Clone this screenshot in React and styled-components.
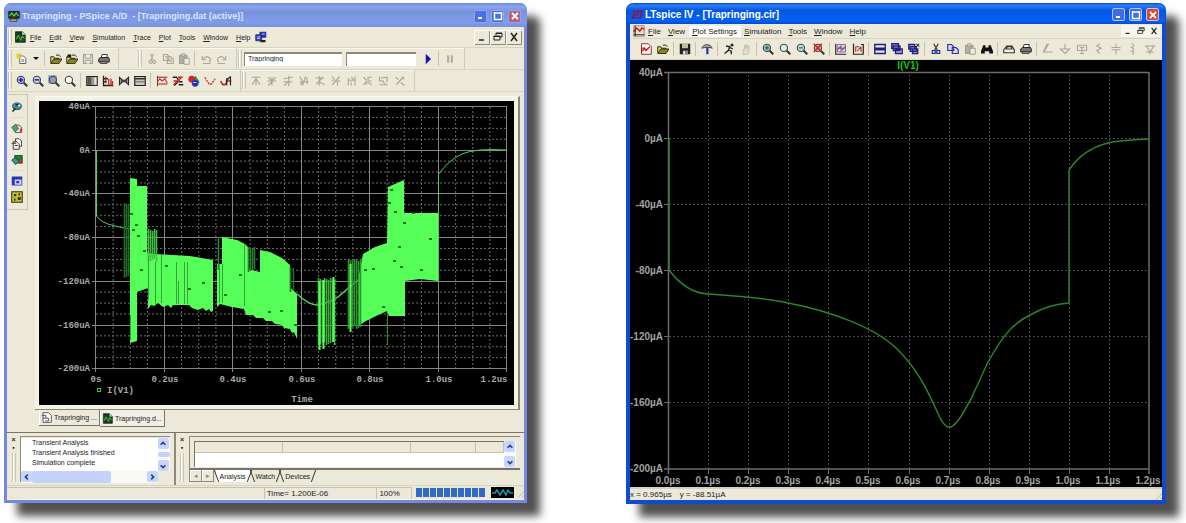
import React from 'react';
import styled, { createGlobalStyle, css } from 'styled-components';

const GlobalStyle = createGlobalStyle`
  * {
    box-sizing: border-box;
  }

  body {
    margin: 0;
    background: #fff;
    color: #222;
    font-family: 'Liberation Sans', Arial, sans-serif;
  }

  button,
  input {
    margin: 0;
    padding: 0;
    border: 0;
    font: inherit;
    color: inherit;
  }
`;

const lens = (tint, mark) => (
  <>
    <path d='M10 10l5 5' stroke='#333' strokeWidth='2.6' />
    <circle cx='6.5' cy='6.5' r='4.8' fill={tint} stroke='#444' strokeWidth='1.5' />
    {mark}
  </>
);

const page = (x, y, fill = '#fff', stroke = '#333') => (
  <path d={`M${x} ${y}h5l3 3v7h-8z`} fill={fill} stroke={stroke} strokeWidth='1.2' />
);

const folder = (
  <>
    <path d='M1 13V5h4l1 2h6v2' fill='#e6dc5a' stroke='#2c2a10' strokeWidth='1.3' />
    <path d='M1 14l4-6h11l-4 6z' fill='#8c8420' stroke='#2c2a10' strokeWidth='1.2' />
    <path d='M8 3q4-2 6 2' stroke='#222' strokeWidth='1.3' fill='none' />
  </>
);

const printer = (
  <>
    <path d='M4 7l1.5-5h7l-1 5' fill='#fff' stroke='#333' strokeWidth='1.3' />
    <path d='M1 8l2-2h11l1 2v4H1z' fill='#777' stroke='#222' strokeWidth='1.3' />
    <path d='M3 12h9v2H3z' fill='#d8d48a' stroke='#222' />
  </>
);

const grey = (d) => (
  <path d={d} stroke='#aaa698' strokeWidth='1.5' fill='none' />
);

const icons = {
  app: (
    <>
      <path d='M1 2h14v9H1z' fill='#173f22' stroke='#111' />
      <path d='M2 8l3-4 3 4 3-4 3 4' stroke='#66e06a' strokeWidth='1.5' fill='none' />
      <path d='M3 12h9v3H3z' fill='#d7c64f' stroke='#222' />
    </>
  ),
  doc: (
    <>
      <path d='M2 1h9l4 4v10H2z' fill='#123c1f' stroke='#0b1f10' />
      <path d='M11 1v4h4' fill='#e6e6e6' />
      <path d='M3 11l3-5 3 6 2-5 3 3' stroke='#25c23a' strokeWidth='1.6' fill='none' />
      <path d='M3 7l4 2 6 4' stroke='#c2412f' fill='none' />
    </>
  ),
  win: (
    <>
      <path d='M6 1h9v8H6z' fill='#2733a8' />
      <path d='M1 5h8v8H1z' fill='#3844c4' stroke='#151b5c' />
      <path d='M3 8h4M3 10h3M9 4h4' stroke='#dfe3ff' strokeWidth='1.2' />
      <path d='M7 12h7v3H7z' fill='#222' />
    </>
  ),
  newFile: (
    <>
      {page(5, 4, '#fff', '#555')}
      <path d='M7 9h4M7 11h4' stroke='#557' />
      <path d='M4 0v8M0 4h8M1 1l6 6M7 1L1 7' stroke='#d8cf2c' strokeWidth='1.5' />
    </>
  ),
  open: folder,
  openDark: (
    <>
      {folder}
      <path d='M2 2h5v4H2z' fill='#111' />
    </>
  ),
  saveOff: (
    <>
      <path d='M2 2h12v12H2z' fill='#dedbca' stroke='#9d9a8b' strokeWidth='1.4' />
      <path d='M5 2v5h6V2M5 14v-4h6v4' stroke='#9d9a8b' strokeWidth='1.2' fill='#f5f3e8' />
    </>
  ),
  save: (
    <>
      <path d='M1 1h14v14H1z' fill='#20241a' />
      <path d='M4 1h8v6H4z' fill='#b9c39b' />
      <path d='M5 10h7v5H5z' fill='#888' />
      <path d='M6 11h2v4H6z' fill='#fff' />
    </>
  ),
  print: printer,
  cutOff: grey('M6 1l4 9M10 1L6 10M6 10a2 2 0 1 0 .1 0M11 10a2 2 0 1 0 .1 0'),
  copyOff: grey('M2 2h5l2 2v6H2zM7 5h5l3 3v6H7zM4 5h3M9 9h4M9 11h4'),
  pasteOff: (
    <>
      <path d='M2 3h10v11H2z' fill='#b3af9f' stroke='#8f8c7d' />
      <path d='M5 1h4v3H5zM8 7h7v8H8z' fill='#eceadc' stroke='#8f8c7d' />
    </>
  ),
  undoOff: grey('M3 4v5h5M4 8q4-5 8-2t0 6M4 14h10'),
  redoOff: grey('M13 4v5H8M12 8q-4-5-8-2t0 6M2 14h10'),
  play: <path d='M5 1l7 7-7 7z' fill='#1414b8' />,
  pauseOff: <path d='M4 3h3v10H4zM9 3h3v10H9z' fill='#b5b2a5' />,
  zoomIn: lens('#b9bff0', <path d='M6.5 3.5v6M3.5 6.5h6' stroke='#1a22b0' strokeWidth='2' />),
  zoomOut: lens('#c9cdf0', <path d='M3.5 6.5h6' stroke='#1a22b0' strokeWidth='2' />),
  zoomArea: (
    <>
      <path d='M1 1h10v10H1z' fill='#a7acd6' stroke='#6a6f9c' strokeDasharray='2 1' />
      {lens('#8f96cc', null)}
    </>
  ),
  zoomFit: lens('#fff', null),
  fade: (
    <>
      <path d='M1 2h14v12H1z' fill='#9a9a94' stroke='#222' strokeWidth='1.4' />
      <path d='M2 3h5v10H2z' fill='#555' />
      <path d='M11 3h3v10h-3z' fill='#e4e2d8' />
    </>
  ),
  fft: (
    <>
      <path d='M2 1v13h13M2 5h6M2 9h4' stroke='#222' strokeWidth='1.7' fill='none' />
      <path d='M5 2v9M9 5v9M12 5v9M14 8v7' stroke='#c22626' strokeWidth='1.7' />
    </>
  ),
  bowtie: (
    <>
      <path d='M2 3l4 4h4l4-4v10l-4-4H6l-4 4z' fill='#999' stroke='#222' strokeWidth='1.4' />
      <path d='M5 5v6M11 5v6' stroke='#222' />
    </>
  ),
  panel: (
    <>
      <path d='M1 2h14v12H1z' fill='#c9c6b6' stroke='#222' strokeWidth='1.6' />
      <path d='M1 4h14v2H1z' fill='#333' />
      <path d='M1 9h14' stroke='#777' strokeWidth='1.6' />
    </>
  ),
  trace: (
    <>
      <path d='M2 1v14M2 3h13M2 12h13' stroke='#8b2020' strokeWidth='1.3' />
      <path d='M2 9l3-4 3 3 4-3 3 6' stroke='#d12b2b' strokeWidth='1.5' fill='none' />
    </>
  ),
  evalX: (
    <>
      <path d='M1 3h5l4 6M9 13h6M9 9h5M8 9l-5 5' stroke='#222' strokeWidth='1.7' fill='none' />
      <path d='M2 13L14 2M8 3h6M2 8h8' stroke='#cf2525' strokeWidth='1.8' />
    </>
  ),
  shapes: (
    <>
      <path d='M10 1l6 9H5z' fill='#1d9c38' />
      <circle cx='5' cy='5.5' r='4.5' fill='#d22525' />
      <circle cx='9.5' cy='11' r='4.5' fill='#2432c4' />
      <path d='M7 10h4' stroke='#fff' />
    </>
  ),
  dots: (
    <path d='M1 3l3 5 3 4h3l3-4 2-3' stroke='#d23131' strokeWidth='1.7' strokeDasharray='3 1' fill='none' />
  ),
  cursorTrace: (
    <>
      <path d='M1 8q2 6 5 5t3-5h6' stroke='#c32020' strokeWidth='2' fill='none' />
      <path d='M14 2L8 8M9 4v10M14 2v12' stroke='#222' strokeWidth='1.5' />
    </>
  ),
  c1: grey('M8 2v12M2 3h12M8 5L3 13M8 5l5 8'),
  c2: grey('M8 2v12M2 8h12M3 3l5 5 5-5M3 14l5-5'),
  c3: grey('M9 1v14M2 5l12-2M2 9h12M8 9l-5 5'),
  c4: grey('M2 2l4 6M10 2L6 14M2 9h12M12 3v9M3 13l4-4'),
  c5: grey('M2 4h11M7 1v13M7 9l7 4M12 3L3 12'),
  c6: grey('M3 2l3 4M13 2L3 13M8 8h6M10 8v6M2 7h4'),
  c7: grey('M3 4v10M3 7h10M12 2v12M7 3l3 3M7 9v5'),
  c8: grey('M2 3l4 4M13 3H8v5h5M2 13q4-6 11 0M5 8v5'),
  c9: grey('M2 2v6h6M4 4l8-1v7M2 13h11M6 8l4 5'),
  c10: grey('M2 3l4 3M13 2L3 13M9 5l5 0M9 10l5 4'),
  probe: (
    <>
      <ellipse cx='8' cy='7' rx='6' ry='4.500' fill='#3b8fa0' stroke='#28404a' />
      <path d='M2 14l4-4M6 5h4' stroke='#222' strokeWidth='2' />
      <circle cx='11' cy='6' r='1.5' fill='#fff' />
    </>
  ),
  sheetGreen: (
    <>
      {page(6, 4, '#ddd', '#555')}
      <path d='M1 7l5-4 4 6-5 4z' fill='#57a462' stroke='#355' />
      <path d='M12 9h3v4h-3z' fill='#c23a3a' />
    </>
  ),
  sheets: (
    <>
      {page(6, 1)}
      {page(3, 5, '#eee')}
      <path d='M1 7h6M5 10h4' stroke='#333' strokeWidth='1.4' />
    </>
  ),
  chip: (
    <>
      <path d='M5 2h10v10H5z' fill='#1f7a38' stroke='#16301d' />
      <path d='M1 8l5-3 5 5-5 4z' fill='#3a9b8e' stroke='#123' />
      <path d='M11 8h4v5h-4z' fill='#b03c2c' />
    </>
  ),
  windowBlue: (
    <>
      <path d='M1 2h14v12H1z' fill='#2b35bb' />
      <path d='M5 6h9v7H5z' fill='#cfd3f5' />
      <path d='M7 8h4v3H7z' fill='#2b35bb' />
    </>
  ),
  board: (
    <>
      <path d='M1 1h14v14H1z' fill='#c8bf3b' stroke='#33300f' strokeWidth='1.4' />
      <path d='M4 4h3v3H4zM9 8h4v4H9zM4 10h2v3H4zM10 3h2v3h-2z' fill='#2e3b14' />
    </>
  ),
  sheetTab: (
    <>
      <path d='M3 1h8l4 4v10H3z' fill='#fff' stroke='#555' strokeWidth='1.4' />
      <path d='M1 5h6v4H3M7 9h4v4H6' stroke='#555' strokeWidth='1.4' fill='none' />
    </>
  ),
  logo: (
    <path d='M5 3h10l-3 9H2zM5 9l6-4' stroke='#8b1a3a' strokeWidth='2.2' fill='none' />
  ),
  plotDoc: (
    <>
      <path d='M1 1h14v14H1z' fill='#f2d9d4' stroke='#777' />
      <path d='M1 9l4-5 4 4 3-4 3 2' stroke='#d01c1c' strokeWidth='2' fill='none' />
      <path d='M1 13h14M3 1v14' stroke='#333' strokeWidth='1.4' />
    </>
  ),
  newPlot: (
    <>
      <path d='M2 1h9l4 4v10H2z' fill='#fff' stroke='#8c2a2a' strokeWidth='1.3' />
      <path d='M3 11l3-4 2 3 5-5M3 7h3' stroke='#d81f1f' strokeWidth='2' fill='none' />
    </>
  ),
  hammer: (
    <>
      <path d='M1 7q2-5 7-5t7 5l-3-1H5z' fill='#9da1a8' stroke='#333' />
      <path d='M7 6h3v9H7z' fill='#2430c8' />
    </>
  ),
  run: (
    <>
      <circle cx='12' cy='2.5' r='2' fill='#222' />
      <path d='M4 4l5 1-2 5-5 4M7 9l4 2v4M9 6l4 2' stroke='#222' strokeWidth='1.8' fill='none' />
    </>
  ),
  handOff: (
    <path d='M4 15V8l2 1V3h1v4l1-5h1v5l2-4v5l1-3v7l-2 4z' fill='#e0ddcf' stroke='#c0bdae' />
  ),
  lensIn: lens('#8fc4bc', <path d='M6.5 4v5M4 6.5h5' stroke='#2b5c55' strokeWidth='1.5' />),
  lensPan: lens('#d8f2ee', null),
  lensOut: lens('#b5e2dc', <path d='M4 6.5h5' stroke='#2b5c55' strokeWidth='1.5' />),
  lensFit: (
    <>
      {lens('#e9a9a9', null)}
      <path d='M1 1l11 11M12 1L1 12' stroke='#cc1e1e' strokeWidth='2' />
    </>
  ),
  grid: (
    <>
      <path d='M1 1v14h14' stroke='#222' strokeWidth='1.5' fill='none' />
      <path d='M3 2h11v10H3zM3 7h11M8 2v10' fill='#d5d3e8' stroke='#555a9c' />
      <path d='M3 9l4-4 3 4 4-5' stroke='#c53030' strokeWidth='1.4' fill='none' />
    </>
  ),
  axes: (
    <>
      <path d='M2 1v14h13V2h-3' stroke='#222' strokeWidth='1.6' fill='none' />
      <path d='M5 12V5h5M12 5l-5 6M12 5v7' stroke='#b02a2a' strokeWidth='1.4' fill='none' />
    </>
  ),
  tile: (
    <path d='M1 2h14v5H1zM1 9h14v5H1z' fill='#e6e8fa' stroke='#20207a' strokeWidth='1.8' />
  ),
  cascade: (
    <path d='M1 1h9v6H1zM3 4h9v6H3zM6 8h9v6H6z' fill='#b6bbf0' stroke='#20207a' strokeWidth='1.7' />
  ),
  closeAll: (
    <>
      <path d='M1 2h8v6H1zM3 5h8v6H3zM6 8h7v6H6z' fill='#b6bbf0' stroke='#20207a' strokeWidth='1.7' />
      <path d='M11 1l4 4M15 1l-4 4' stroke='#222' strokeWidth='1.4' />
    </>
  ),
  cut: (
    <>
      <path d='M5 1l5 9M11 1L6 10' stroke='#333' strokeWidth='1.6' />
      <path d='M3 10h4v4H3zM9 10h4v4H9z' fill='#c9ccf5' stroke='#252a90' strokeWidth='1.5' />
    </>
  ),
  copy: (
    <path d='M1 2h5l3 3v5H1zM7 6h5l3 3v5H7z' fill='#d5d8f5' stroke='#2c3290' strokeWidth='1.5' />
  ),
  find: (
    <path d='M3 3h3v3h4V3h3l3 8v3h-5v-3H5v3H0v-3z' fill='#111' />
  ),
  setup: (
    <path d='M1 9l4-5h7l3 5v4H1zM4 8l2-3h5l1 3z' fill='#f4f2e8' stroke='#333' strokeWidth='1.5' />
  ),
  wireOff: grey('M9 1L3 11M7 1L2 12h12'),
  gndOff: grey('M8 1v7M2 8h12l-6 6z'),
  labelOff: grey('M2 3h12v7H2zM8 5v9M5 14h6M5 6h6'),
  resOff: grey('M9 1l-4 3 6 3-6 3 4 4'),
  capOff: grey('M8 1v5M2 6h12M2 9h12M8 9v6'),
  indOff: grey('M6 1q6 2 0 5 6 2 0 5 5 1 1 4'),
  diodeOff: grey('M1 4h14M3 4l5 8 5-8M3 12h10M8 12v3'),
  partOff: grey('M4 2h10v11H4zM1 7h3'),
};

const Icon = ({ name, size = 12 }) => (
  <svg width={size} height={size} viewBox='0 0 16 16' fill='none' aria-hidden='true'>
    {icons[name]}
  </svg>
);

const Tools = ({ names }) =>
  names.map((name, i) =>
    name === '|' ? (
      <Separator key={i} />
    ) : (
      <ToolButton key={i} type='button' aria-label={name}>
        <Icon name={name} />
      </ToolButton>
    )
  );

const Menu = ({ items, active, slim }) =>
  items.map((item) => (
    <MenuButton key={item} type='button' $active={item === active} $slim={slim}>
      <u>{item[0]}</u>
      {item.slice(1)}
    </MenuButton>
  ));

const WindowControls = () => (
  <Controls>
    <ControlButton type='button' aria-label='Minimize'>
      <svg width='10' height='10' viewBox='0 0 10 10'>
        <path d='M2 7h4' stroke='#fff' strokeWidth='2' />
      </svg>
    </ControlButton>
    <ControlButton type='button' aria-label='Maximize'>
      <svg width='10' height='10' viewBox='0 0 10 10'>
        <path d='M1 2h8M1.5 1v7.5h7V1' stroke='#fff' strokeWidth='1.5' fill='none' />
      </svg>
    </ControlButton>
    <ControlButton type='button' aria-label='Close' $close>
      <svg width='10' height='10' viewBox='0 0 10 10'>
        <path d='M2 2l6 6M8 2L2 8' stroke='#fff' strokeWidth='1.8' />
      </svg>
    </ControlButton>
  </Controls>
);

const ChildControls = ({ flat }) => (
  <ChildGroup>
    <ChildButton type='button' aria-label='Minimize document' $flat={flat}>
      <svg width='10' height='10' viewBox='0 0 10 10'>
        <path d='M2 8h5' stroke='#222' strokeWidth='1.5' />
      </svg>
    </ChildButton>
    <ChildButton type='button' aria-label='Restore document' $flat={flat}>
      <svg width='10' height='10' viewBox='0 0 10 10'>
        <path d='M3 3V1h6v4H7M1 4h6v4H1zM1 4.5h6M3 1.5h6' stroke='#222' fill='none' />
      </svg>
    </ChildButton>
    <ChildButton type='button' aria-label='Close document' $flat={flat}>
      <svg width='10' height='10' viewBox='0 0 10 10'>
        <path d='M2 1l6 8M8 1L2 9' stroke='#222' strokeWidth='1.5' />
      </svg>
    </ChildButton>
  </ChildGroup>
);

const arrows = {
  up: 'M2 6l3-3 3 3',
  down: 'M2 4l3 3 3-3',
  left: 'M6 2L3 5l3 3',
  right: 'M4 2l3 3-3 3',
};

const Arrow = ({ dir }) => (
  <ArrowButton type='button' aria-label={`Scroll ${dir}`}>
    <svg width='8' height='8' viewBox='0 0 10 10'>
      <path d={arrows[dir]} stroke='#27407c' strokeWidth='2' fill='none' />
    </svg>
  </ArrowButton>
);

const range = (n) => Array.from({ length: n }, (_, i) => i);

// oscillating current, dense blocks between 0.1us and 1.0us
const bursts = [
  'M130 178L137 179V186H147V253L155 254L190 256L213 260V311L211 312L209 309L206 311L203 308L198 310L192 308L189 305H173L171 308L168 305L163 307L158 303L154 306L151 305L148 309V288L137 292V341L130 343Z',
  'M217 264H222V237L237 240L245 244L248 247V269L260 272V250L270 252L282 258L290 265V287L297 294V339L294 332L292 333L290 329L284 328L282 325L275 324L272 321L266 321L263 318L256 318L253 315L246 315L244 309L232 307L220 304L217 307Z',
  'M358 280L363 254L375 247L387 243L388 187L404 180V213L438 213V281L420 279L405 281V316H389L387 311L376 316L366 321L358 326Z',
];

const stripes = [
  { from: 124, to: 130, top: 203, bottom: 278, color: '#246b28', step: 2 },
  { from: 148, to: 158, top: 229, bottom: 262, color: '#44c046', step: 2 },
  { from: 218, to: 221, top: 237, bottom: 270, color: '#2a852c', step: 2 },
  { from: 248, to: 257, top: 247, bottom: 272, color: '#2b7d2e', step: 2 },
  { from: 290, to: 298, top: 267, bottom: 292, color: '#24682a', step: 3 },
  { from: 318, to: 336, top: 278, bottom: 345, color: '#3cae3e', step: 2 },
  { from: 348, to: 363, top: 259, bottom: 329, color: '#2f9432', step: 2 },
];

const cuts = [
  [148, 256, 300], [155, 262, 304], [161, 254, 303], [176, 262, 304], [178, 281, 304],
  [184, 262, 304], [187, 262, 304], [219, 264, 303], [222, 264, 303], [244, 244, 306],
  [130, 315, 340],
];

const specks = [
  [131, 214], [136, 225], [133, 230], [138, 236], [144, 251], [141, 270], [166, 266],
  [203, 283], [189, 289], [225, 295], [240, 275], [269, 312], [281, 311], [295, 325],
  [391, 190], [389, 203], [395, 212], [404, 223], [413, 213], [430, 239], [399, 247],
  [394, 261], [401, 267], [421, 270], [365, 270], [373, 269], [383, 307],
];

const TrapringChart = () => (
  <Chart viewBox='39 101 475 304' role='img' aria-label='I(V1) against time'>
    <rect x='39' y='101' width='475' height='304' fill='#000' />
    <g stroke='#6c6c6c' strokeDasharray='2 2'>
      {range(25).map((i) => i % 4 !== 0 && (
        <path key={i} d={`M${96 + i * 17.125} 107V368`} />
      ))}
      {range(25).map((i) => i % 4 !== 0 && (
        <path key={i} d={`M96 ${106.5 + i * 10.92}H507`} />
      ))}
    </g>
    <g stroke='#858585'>
      {range(7).map((i) => (
        <path key={i} d={`M${Math.round(96 + i * 68.5) - 0.5} 106V372`} />
      ))}
      {range(7).map((i) => (
        <path key={i} d={`M92 ${Math.round(106 + i * 43.7) + 0.5}H507`} />
      ))}
    </g>
    <g stroke='#55cf58' fill='none'>
      <path d='M96.500 150V216Q101 223 115 226T131 229' />
      <path d='M297 294Q309 305 317 305 333 303 345 291L358 280' strokeWidth='1.5' />
      <path d='M438.500 281V174Q449 160 462 154T507 150' />
      <path d='M387.500 311V345' stroke='#2b8a2e' />
    </g>
    {bursts.map((d) => (
      <path key={d} d={d} fill='#55ff57' />
    ))}
    {stripes.map(({ from, to, top, bottom, color, step }) =>
      range(Math.floor((to - from) / step)).map((i) => (
        <path
          key={`${from}-${i}`}
          d={`M${from + i * step + 0.5} ${top + (i % 3)}V${bottom - (i % 4)}`}
          stroke={color}
          strokeWidth='1.6'
        />
      ))
    )}
    <path d='M319.500 281V350M323.500 280V349M333.500 277V342M350.500 264V332' stroke='#55ff57' strokeWidth='2' />
    {cuts.map(([x, top, bottom]) => (
      <path key={x} d={`M${x + 0.5} ${top}V${bottom}`} stroke='#35a338' />
    ))}
    {specks.map(([x, y]) => (
      <path key={`${x}-${y}`} d={`M${x - 1} ${y}h3`} stroke='#0c4a10' strokeWidth='1.5' />
    ))}
    <MonoLabels textAnchor='end'>
      {['40uA', '0A', '-40uA', '-80uA', '-120uA', '-160uA', '-200uA'].map((label, i) => (
        <text key={label} x='90' y={Math.round(109 + i * 43.7)}>{label}</text>
      ))}
    </MonoLabels>
    <MonoLabels textAnchor='middle'>
      {['0s', '0.2us', '0.4us', '0.6us', '0.8us', '1.0us'].map((label, i) => (
        <text key={label} x={Math.round(96 + i * 68.5)} y='382'>{label}</text>
      ))}
      <text x='494' y='382'>1.2us</text>
      <text x='302' y='402'>Time</text>
    </MonoLabels>
    <rect x='97.500' y='388.500' width='3' height='3' fill='none' stroke='#3fbf42' />
    <MonoLabels>
      <text x='107' y='393'>I(V1)</text>
    </MonoLabels>
  </Chart>
);

const SmoothChart = () => (
  <Chart viewBox='630 60 532 427' role='img' aria-label='I(V1) against time'>
    <rect x='630' y='60' width='532' height='427' fill='#000' />
    <g stroke='#4a4a4a' strokeDasharray='2 2'>
      {range(11).map((i) => (
        <path key={i} d={`M${Math.round(708 + i * 40.1) + 0.5} 75V469`} />
      ))}
      {range(5).map((i) => (
        <path key={i} d={`M669 ${138.5 + i * 66}H1149`} />
      ))}
    </g>
    <g stroke='#6c6c6c'>
      <path d='M668.500 72V474M1149 72V474M664 72.500H1149M664 469H1149' strokeWidth='1.5' />
      {range(5).map((i) => (
        <path key={i} d={`M664 ${138.5 + i * 66}h5`} />
      ))}
      {range(11).map((i) => (
        <path key={i} d={`M${Math.round(708 + i * 40.1) + 0.5} 469v5`} />
      ))}
    </g>
    <path
      d='M669 139V270C678 282 690 293 708 294C736 296 760 297 788 303C830 311 874 327 896 348C918 369 928 392 936 409C940 419 944 427 949 427C957 427 965 409 971 399L988 362C1000 341 1010 324 1032 314C1044 307 1056 304 1069 303V170C1079 155 1092 147 1108 143C1121 140 1135 140 1149 139'
      fill='none'
      stroke='#2b832d'
      strokeWidth='1.5'
    />
    <AxisLabels textAnchor='end'>
      {['40µA', '0µA', '-40µA', '-80µA', '-120µA', '-160µA', '-200µA'].map((label, i) => (
        <text key={label} x='663' y={76 + i * 66}>{label}</text>
      ))}
    </AxisLabels>
    <AxisLabels textAnchor='middle'>
      {range(13).map((i) => (
        <text key={i} x={Math.round(668 + i * 40)} y='484'>{(i / 10).toFixed(1)}µs</text>
      ))}
      <text x='908' y='69' fill='#12c412'>I(V1)</text>
    </AxisLabels>
  </Chart>
);

const App = () => (
  <>
    <GlobalStyle />
    <Desktop>
      <Window $inactive>
        <TitleBar $inactive>
          <Icon name='app' />
          <h1>Trapringing - PSpice A/D &nbsp;- [Trapringing.dat (active)]</h1>
          <WindowControls />
        </TitleBar>

        <MenuBar>
          <Grip />
          <Icon name='doc' />
          <Menu items={['File', 'Edit', 'View', 'Simulation', 'Trace', 'Plot', 'Tools', 'Window', 'Help']} />
          <Icon name='win' />
          <ChildControls />
        </MenuBar>

        <ToolRow>
          <ToolGroup>
            <Grip />
            <Tools names={['newFile']} />
            <DropButton type='button' aria-label='New file options' />
            <Tools names={['|', 'open', 'openDark', 'saveOff', 'print']} />
          </ToolGroup>
          <Spacer />
          <ToolGroup>
            <Grip />
            <Tools names={['cutOff', 'copyOff', 'pasteOff', '|', 'undoOff', 'redoOff']} />
          </ToolGroup>
          <ToolGroup>
            <Grip />
            <Field aria-label='Profile' defaultValue='Trapringing' $width={98} />
            <Field aria-label='Run to' $width={70} />
            <Tools names={['play', '|', 'pauseOff']} />
          </ToolGroup>
        </ToolRow>

        <ToolRow>
          <ToolGroup>
            <Grip />
            <Tools
              names={[
                'zoomIn', 'zoomOut', 'zoomArea', 'zoomFit', '|',
                'fade', 'fft', 'bowtie', 'panel', '|',
                'trace', 'evalX', 'shapes', 'dots', 'cursorTrace',
              ]}
            />
          </ToolGroup>
          <ToolGroup>
            <Grip />
            <Tools names={['c1', 'c2', 'c3', 'c4', 'c5', 'c6', 'c7', 'c8', 'c9', 'c10']} />
          </ToolGroup>
        </ToolRow>

        <Workspace>
          <SideBar>
            <Tools names={['probe', '|', 'sheetGreen', 'sheets', 'chip', '|', 'windowBlue', 'board']} />
          </SideBar>
          <Documents>
            <ChartFrame>
              <TrapringChart />
            </ChartFrame>
            <DocTabs>
              <DocTab type='button'>
                <Icon name='sheetTab' size={11} />
                Trapringing ...
              </DocTab>
              <DocTab type='button' $active>
                <Icon name='doc' size={11} />
                Trapringing.d...
              </DocTab>
            </DocTabs>
          </Documents>
        </Workspace>

        <Panels>
          <Panel $narrow>
            <PanelHandle>
              <button type='button' aria-label='Close output'>×</button>
              <button type='button' aria-label='Pin output'>▪</button>
              <Grip />
            </PanelHandle>
            <Output>
              <OutputLines>
                <p>Transient Analysis</p>
                <p>Transient Analysis finished</p>
                <p>Simulation complete</p>
              </OutputLines>
              <ScrollColumn>
                <Arrow dir='up' />
                <Thumb />
                <Arrow dir='down' />
              </ScrollColumn>
              <ScrollRow>
                <Arrow dir='left' />
                <Thumb />
                <Gutter />
                <Arrow dir='right' />
              </ScrollRow>
            </Output>
          </Panel>

          <Panel>
            <PanelHandle>
              <button type='button' aria-label='Close watch'>×</button>
              <button type='button' aria-label='Pin watch'>▪</button>
              <Grip />
            </PanelHandle>
            <WatchArea>
              <WatchBox>
                <WatchTable>
                  <span />
                  <span />
                  <span />
                  <span />
                </WatchTable>
                <ScrollColumn>
                  <Arrow dir='up' />
                  <Arrow dir='down' />
                </ScrollColumn>
              </WatchBox>
              <SheetTabs>
                <StepButton type='button' aria-label='Previous sheet'>◂</StepButton>
                <StepButton type='button' aria-label='Next sheet'>▸</StepButton>
                <SheetTab type='button' $active>Analysis</SheetTab>
                <SheetTab type='button'>Watch</SheetTab>
                <SheetTab type='button'>Devices</SheetTab>
              </SheetTabs>
            </WatchArea>
          </Panel>
        </Panels>

        <StatusBar>
          <StatusCell $grow={258} />
          <StatusCell $grow={111}>Time= 1.200E-06</StatusCell>
          <StatusCell $grow={32}>100%</StatusCell>
          <Progress>
            {range(10).map((i) => (
              <i key={i} />
            ))}
          </Progress>
          <svg width='23' height='11' viewBox='0 0 23 11' aria-hidden='true'>
            <rect width='23' height='11' fill='#000' />
            <path d='M1 6h3l2-3 3 5 3-5 3 5 2-5 2 3h3' stroke='#1d93a8' strokeWidth='1.5' fill='none' />
          </svg>
          <SizeGrip />
        </StatusBar>
      </Window>

      <Window>
        <TitleBar>
          <Icon name='logo' />
          <h1>LTspice IV - [Trapringing.cir]</h1>
          <WindowControls />
        </TitleBar>

        <MenuBar $slim>
          <Icon name='plotDoc' />
          <Menu
            slim
            items={['File', 'View', 'Plot Settings', 'Simulation', 'Tools', 'Window', 'Help']}
            active='Plot Settings'
          />
          <ChildControls flat />
        </MenuBar>

        <ToolRow $wide>
          <Tools
            names={[
              'newPlot', 'open', '|', 'save', '|', 'hammer', '|', 'run', 'handOff', '|',
              'lensIn', 'lensPan', 'lensOut', 'lensFit', '|', 'grid', 'axes', '|',
              'tile', 'cascade', 'closeAll', '|', 'cut', 'copy', 'pasteOff', 'find', '|',
              'setup', 'print', '|', 'wireOff', 'gndOff', 'labelOff', 'resOff', 'capOff',
              'indOff', 'diodeOff', 'partOff',
            ]}
          />
        </ToolRow>

        <SmoothChart />

        <Readout>
          <span>x = 0.965µs</span>
          <span>y = -88.51µA</span>
          <SizeGrip />
        </Readout>
      </Window>
    </Desktop>
  </>
);

export default App;

const Desktop = styled.main`
  display: grid;
  grid-template-columns: 523fr 540fr;
  column-gap: 99px;
  align-items: start;
  min-height: 100vh;
  padding: 3px 20px 0 4px;
  overflow: hidden;
`;

const Window = styled.section`
  min-width: 0;
  border: ${({ $inactive }) => ($inactive ? '3px solid #7687df' : '4px solid #1149cf')};
  border-top: 0;
  border-radius: 7px 7px 0 0;
  background: #ece9d8;
  box-shadow: 13px 13px 8px rgba(44, 40, 40, 0.82);
  font-size: ${({ $inactive }) => ($inactive ? '7px' : '8px')};

  h1 {
    flex: 1;
    margin: 0;
    color: #fff;
    font-size: ${({ $inactive }) => ($inactive ? '9px' : '10px')};
    white-space: nowrap;
  }
`;

const TitleBar = styled.header`
  display: flex;
  align-items: center;
  column-gap: 2px;
  height: ${({ $inactive }) => ($inactive ? '24px' : '21px')};
  margin: 0 -3px;
  padding: 2px 6px 0 4px;
  border-radius: 7px 7px 0 0;
  background: ${({ $inactive }) =>
    $inactive
      ? 'linear-gradient(#7089d8, #88a4ee 15%, #7893dc 35%, #7e9ce8 80%, #7890dc)'
      : 'linear-gradient(#0a4ac8, #2b7cf4 12%, #0557e2 35%, #0461f4 85%, #0a48cc)'};

  h1 {
    color: ${({ $inactive }) => ($inactive ? '#dbe3fb' : '#fff')};
  }
`;

const Controls = styled.div`
  display: flex;
  column-gap: 4px;
`;

const ControlButton = styled.button`
  display: grid;
  place-items: center;
  width: 13px;
  height: 13px;
  border: 1px solid #b4c5f7;
  border-radius: 2px;
  background: #3f6be4;

  ${Window}:first-child & {
    border-color: #8fa6ee;
    background: #4b70e2;
  }

  ${({ $close }) =>
    $close &&
    css`
      && {
        background: #dc4a28;
      }

      ${Window}:first-child && {
        background: #b5637c;
      }
    `}
`;

const MenuBar = styled.nav`
  display: flex;
  align-items: center;
  height: ${({ $slim }) => ($slim ? '15px' : '21px')};
  padding-left: ${({ $slim }) => ($slim ? '3px' : '0')};
  border-bottom: 1px solid #d8d4c2;
`;

const MenuButton = styled.button`
  padding: ${({ $slim }) => ($slim ? '1px 4px 1px 3px' : '1px 4px')};
  background: ${({ $active }) => ($active ? '#fff' : 'none')};
  white-space: nowrap;
`;

const ChildGroup = styled.div`
  display: flex;
  margin-left: auto;
  padding-right: 2px;
`;

const ChildButton = styled.button`
  display: grid;
  place-items: center;
  width: ${({ $flat }) => ($flat ? '13px' : '16px')};
  height: ${({ $flat }) => ($flat ? '12px' : '15px')};
  background: ${({ $flat }) => ($flat ? '#f6f5ee' : '#ece9d8')};
  box-shadow: ${({ $flat }) =>
    $flat ? 'none' : 'inset 1px 1px #fff, inset -1px -1px #8d8a7b'};

  svg {
    width: ${({ $flat }) => ($flat ? '8px' : '10px')};
  }
`;

const Grip = styled.span`
  flex: none;
  align-self: stretch;
  width: 4px;
  margin: 2px 2px 2px 1px;
  border: solid #c9c5b4;
  border-width: 0 1px;
  box-shadow: inset 1px 0 #fff;
`;

const Separator = styled.span`
  flex: none;
  align-self: stretch;
  width: 1px;
  margin: 3px 3px 3px 2px;
  background: #c5c1b0;
`;

const ToolButton = styled.button`
  flex: none;
  display: grid;
  place-items: center;
  width: 16px;
  height: 16px;
  background: none;
`;

const ToolRow = styled.div`
  display: flex;
  align-items: center;
  height: ${({ $wide }) => ($wide ? '21px' : '22px')};
  padding-left: ${({ $wide }) => ($wide ? '7px' : '0')};
  border-bottom: 1px solid #d8d4c2;
  overflow: hidden;

  ${({ $wide }) =>
    $wide &&
    css`
      ${ToolButton} {
        width: 17px;
      }

      ${Separator} {
        margin: 3px 2px;
      }
    `}
`;

const ToolGroup = styled.div`
  display: flex;
  align-items: center;
  align-self: stretch;
  padding-right: 6px;
  border-right: 1px solid #cfcbba;
  box-shadow: inset 0 1px #f8f7ef;
`;

const Spacer = styled.span`
  width: 18px;
`;

const DropButton = styled.button`
  display: grid;
  place-items: center;
  width: 12px;
  height: 16px;
  background: none;

  &::before {
    content: '';
    border: solid transparent;
    border-width: 3px 3px 0;
    border-top-color: #111;
  }
`;

const Field = styled.input`
  width: ${({ $width }) => $width}px;
  height: 14px;
  margin-right: 4px;
  padding: 0 3px 2px;
  border: solid #8d8a7b;
  border-width: 2px 0 0 1px;
  background: #fff;
`;

const Workspace = styled.div`
  display: flex;
  align-items: flex-start;
`;

const SideBar = styled.div`
  display: flex;
  flex-direction: column;
  align-items: center;
  width: 21px;
  margin-top: 2px;
  padding: 4px 0;
  border: solid #cbc7b6;
  border-width: 1px 1px 1px 0;

  ${Separator} {
    width: 14px;
    height: 1px;
    margin: 2px auto;
    background: #dedbcb;
  }
`;

const Documents = styled.div`
  flex: 1;
  min-width: 0;
  margin: 4px 4px 5px 7px;
`;

const ChartFrame = styled.div`
  padding: 4px;
  border: solid #8a8674;
  border-width: 1px 2px 1px 0;
  border-top-color: #f9f8f1;
  background: #f4f2e6;
`;

const Chart = styled.svg`
  display: block;
  width: 100%;
  height: auto;
`;

const MonoLabels = styled.g`
  fill: #a8a8a8;
  font-family: 'Liberation Mono', monospace;
  font-size: 9px;
  font-weight: bold;
`;

const AxisLabels = styled.g`
  fill: #a0a0a0;
  font-size: 10px;
  font-weight: bold;
`;

const DocTabs = styled.div`
  display: flex;
  align-items: flex-start;
  padding-left: 4px;
`;

const DocTab = styled.button`
  display: flex;
  align-items: center;
  column-gap: 2px;
  height: ${({ $active }) => ($active ? '17px' : '16px')};
  padding: 0 2px;
  border: solid #77746a;
  border-width: 0 1px 1px 0;
  background: ${({ $active }) => ($active ? '#f1efe3' : '#ece9d8')};
  box-shadow: inset 1px 0 #fff;
`;

const Panels = styled.div`
  display: flex;
  height: 53px;
  border-top: 1px solid #77746a;
`;

const Panel = styled.div`
  display: flex;
  flex: ${({ $narrow }) => ($narrow ? 165 : 352)};
  min-width: 0;
  padding: 3px 4px 3px 2px;
  border-right: ${({ $narrow }) => ($narrow ? '2px solid #8d8a7b' : '0')};
`;

const PanelHandle = styled.div`
  display: flex;
  flex-direction: column;
  align-items: center;
  flex: none;
  width: 9px;

  button {
    width: 7px;
    height: 8px;
    background: none;
    line-height: 8px;
    font-weight: bold;
  }

  ${Grip} {
    flex: 1;
    align-self: center;
    margin: 1px 0 0;
  }
`;

const Output = styled.div`
  flex: 1;
  display: grid;
  grid-template: 33px 12px / 1fr 12px;
  margin-left: 2px;
  padding-top: 1px;
  border: solid #8d8a7b;
  border-width: 1px 0 0 1px;
`;

const OutputLines = styled.div`
  padding-left: 11px;
  background: #fff;

  p {
    margin: 0;
    line-height: 10px;
    white-space: nowrap;
  }
`;

const ArrowButton = styled.button`
  flex: none;
  display: grid;
  place-items: center;
  width: 11px;
  height: 11px;
  border-radius: 2px;
  background: #c6d5fb;
`;

const Thumb = styled.span`
  flex: 1;
  border-radius: 2px;
  background: #c3d2fa;
`;

const Gutter = styled.span`
  flex: 0 0 36px;
`;

const ScrollColumn = styled.div`
  display: flex;
  flex-direction: column;
  justify-content: space-between;
  row-gap: 3px;
  width: 12px;
  background: #f8f8f5;
`;

const ScrollRow = styled.div`
  display: flex;
  align-items: stretch;
  background: #f8f8f5;
`;

const WatchArea = styled.div`
  flex: 1;
  min-width: 0;
  margin-left: 2px;
  border: solid #8d8a7b;
  border-width: 1px 0 0 1px;
`;

const WatchBox = styled.div`
  display: flex;
  height: 33px;
  padding: 4px 4px 1px;
  border-bottom: 2px solid #77746a;
`;

const WatchTable = styled.div`
  flex: 1;
  display: grid;
  grid-template: 11px / 90fr 130fr 66fr 28fr;
  border: solid #77746a;
  border-width: 1px 0 0 1px;
  background: #fff;

  span {
    border: solid #c5c1b0;
    border-width: 0 1px 1px 0;
    background: #ece9d8;
  }
`;

const SheetTabs = styled.div`
  display: flex;
  height: 12px;
`;

const StepButton = styled.button`
  width: 12px;
  background: #ece9d8;
  box-shadow: inset -1px -1px #8d8a7b, inset 1px 1px #fff;
  color: #8d8a7b;
`;

const SheetTab = styled.button`
  display: flex;
  align-items: center;
  column-gap: 3px;
  margin-left: 2px;
  background: ${({ $active }) => ($active ? '#fff' : 'none')};

  &::before,
  &::after {
    content: '';
    align-self: stretch;
    border-left: 1px solid #333;
    transform: skewX(20deg);
  }

  &::after {
    transform: skewX(-20deg);
  }
`;

const StatusBar = styled.footer`
  display: flex;
  align-items: center;
  height: 15px;
  border-top: 1px solid #d8d4c2;
  border-bottom: 1px solid #f5f3e8;
  font-size: 8px;
`;

const StatusCell = styled.span`
  flex: ${({ $grow }) => $grow};
  min-width: 0;
  padding-left: 2px;
  border: solid #c5c1b0;
  border-width: 1px 1px 0 0;
  height: 12px;
  line-height: 12px;
  white-space: nowrap;
`;

const Progress = styled.span`
  display: flex;
  column-gap: 1px;
  margin: 0 6px 0 4px;

  i {
    width: 6px;
    height: 9px;
    background: #3169c6;
  }
`;

const SizeGrip = styled.span`
  width: 10px;
  height: 10px;
  margin-left: auto;
  background: repeating-linear-gradient(135deg, #d3cfbd 0 1px, transparent 1px 3px);
  clip-path: polygon(100% 0, 100% 100%, 0 100%);
`;

const Readout = styled.footer`
  display: flex;
  align-items: center;
  column-gap: 8px;
  height: 13px;
  border-top: 2px solid #d3d0c2;
`;
